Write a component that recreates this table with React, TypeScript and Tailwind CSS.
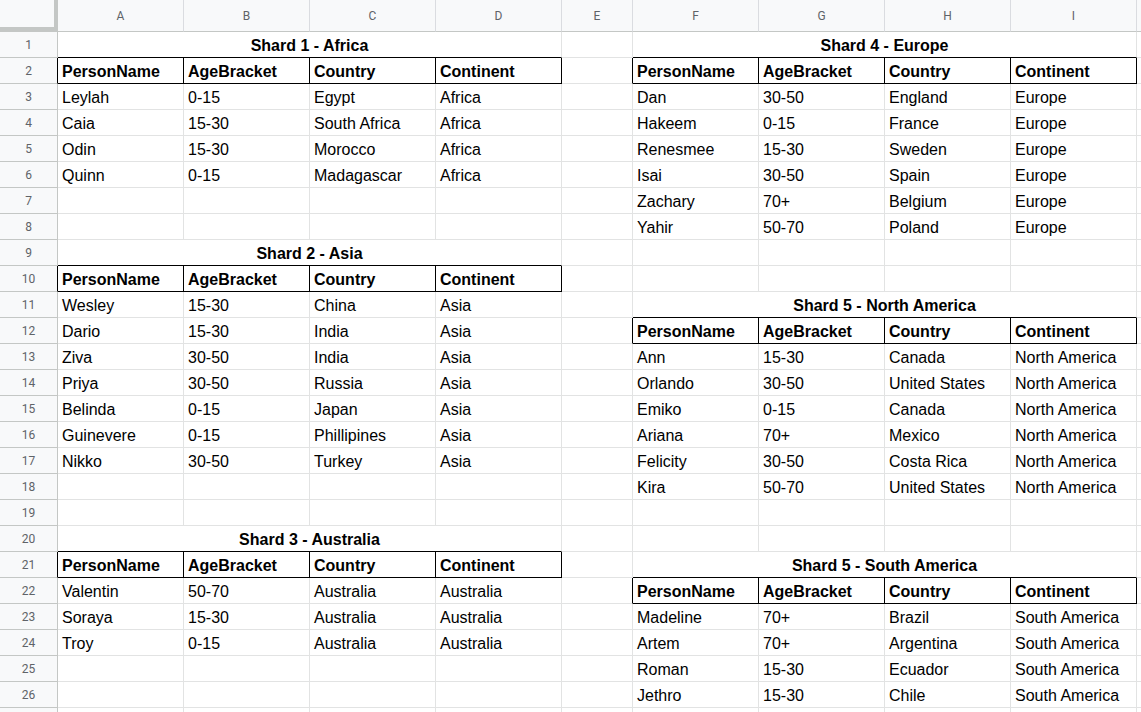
import type { FunctionComponent } from "react";

type Block =
  | { kind: "title"; text: string }
  | { kind: "header" }
  | { kind: "data"; vals: string[] }
  | { kind: "empty" };

const T = (text: string): Block => ({ kind: "title", text });
const H: Block = { kind: "header" };
const E: Block = { kind: "empty" };
const D = (...vals: string[]): Block => ({ kind: "data", vals });

const HEADINGS = ["PersonName", "AgeBracket", "Country", "Continent"];
const LETTERS = ["A", "B", "C", "D", "E", "F", "G", "H", "I", ""];

// [left block (A-D), right block (F-I)] per sheet row
const rows: [Block, Block][] = [
  [T("Shard 1 - Africa"), T("Shard 4 - Europe")],
  [H, H],
  [D("Leylah", "0-15", "Egypt", "Africa"), D("Dan", "30-50", "England", "Europe")],
  [D("Caia", "15-30", "South Africa", "Africa"), D("Hakeem", "0-15", "France", "Europe")],
  [D("Odin", "15-30", "Morocco", "Africa"), D("Renesmee", "15-30", "Sweden", "Europe")],
  [D("Quinn", "0-15", "Madagascar", "Africa"), D("Isai", "30-50", "Spain", "Europe")],
  [E, D("Zachary", "70+", "Belgium", "Europe")],
  [E, D("Yahir", "50-70", "Poland", "Europe")],
  [T("Shard 2 - Asia"), E],
  [H, E],
  [D("Wesley", "15-30", "China", "Asia"), T("Shard 5 - North America")],
  [D("Dario", "15-30", "India", "Asia"), H],
  [D("Ziva", "30-50", "India", "Asia"), D("Ann", "15-30", "Canada", "North America")],
  [D("Priya", "30-50", "Russia", "Asia"), D("Orlando", "30-50", "United States", "North America")],
  [D("Belinda", "0-15", "Japan", "Asia"), D("Emiko", "0-15", "Canada", "North America")],
  [D("Guinevere", "0-15", "Phillipines", "Asia"), D("Ariana", "70+", "Mexico", "North America")],
  [D("Nikko", "30-50", "Turkey", "Asia"), D("Felicity", "30-50", "Costa Rica", "North America")],
  [E, D("Kira", "50-70", "United States", "North America")],
  [E, E],
  [T("Shard 3 - Australia"), E],
  [H, T("Shard 5 - South America")],
  [D("Valentin", "50-70", "Australia", "Australia"), H],
  [D("Soraya", "15-30", "Australia", "Australia"), D("Madeline", "70+", "Brazil", "South America")],
  [D("Troy", "0-15", "Australia", "Australia"), D("Artem", "70+", "Argentina", "South America")],
  [E, D("Roman", "15-30", "Ecuador", "South America")],
  [E, D("Jethro", "15-30", "Chile", "South America")],
  [E, E],
];

const cellBase =
  "h-[26px] border-r border-b px-[4px] pt-[1px] text-[16px] leading-[25px] text-black whitespace-nowrap overflow-hidden";

const BlockCells: FunctionComponent<{ block: Block }> = ({ block }) => {
  if (block.kind === "title") {
    return (
      <div
        className={`${cellBase} col-span-4 border-r-[#e2e3e3] border-b-black text-center font-bold`}
      >
        {block.text}
      </div>
    );
  }
  if (block.kind === "header") {
    return (
      <>
        {HEADINGS.map((h) => (
          <div key={h} className={`${cellBase} border-r-black border-b-black font-bold`}>
            {h}
          </div>
        ))}
      </>
    );
  }
  const vals = block.kind === "data" ? block.vals : ["", "", "", ""];
  return (
    <>
      {vals.map((v, i) => (
        <div key={i} className={`${cellBase} border-r-[#e2e3e3] border-b-[#e2e3e3]`}>
          {v}
        </div>
      ))}
    </>
  );
};

const App: FunctionComponent = () => {
  return (
    <div className="h-[712px] w-full overflow-hidden bg-white font-['Liberation_Sans',Arial,sans-serif]">
      <div className="grid grid-cols-[58px_repeat(4,126px)_71px_repeat(4,126px)_1fr]">
        {/* corner with freeze handles */}
        <div className="h-[32px] border-r-4 border-b-[5px] border-r-[#c4c7c5] border-b-[#c4c7c5] bg-[#f8f9fa]" />
        {LETTERS.map((l, i) => (
          <div
            key={i}
            className="flex h-[32px] items-center justify-center border-r border-b border-r-[#dadce0] border-b-[#c4c7c5] bg-[#f8f9fa] pt-[1px] font-['Roboto',Arial,sans-serif] text-[12px] text-[#5f6368]"
          >
            {l}
          </div>
        ))}

        {rows.map(([left, right], r) => (
          <div key={r} className="contents">
            <div
              className={`h-[26px] border-r border-b border-b-[#c4c7c5] bg-[#f8f9fa] pt-[1px] text-center font-['Roboto',Arial,sans-serif] text-[12px] leading-[25px] text-[#5f6368] ${
                left.kind === "header" ? "border-r-black" : "border-r-[#c4c7c5]"
              }`}
            >
              {r < 26 ? r + 1 : ""}
            </div>
            <BlockCells block={left} />
            <div
              className={`${cellBase} border-b-[#e2e3e3] ${
                right.kind === "header" ? "border-r-black" : "border-r-[#e2e3e3]"
              }`}
            />
            <BlockCells block={right} />
            <div className={`${cellBase} border-r-[#e2e3e3] border-b-[#e2e3e3]`} />
          </div>
        ))}
      </div>
    </div>
  );
};

export default App;
